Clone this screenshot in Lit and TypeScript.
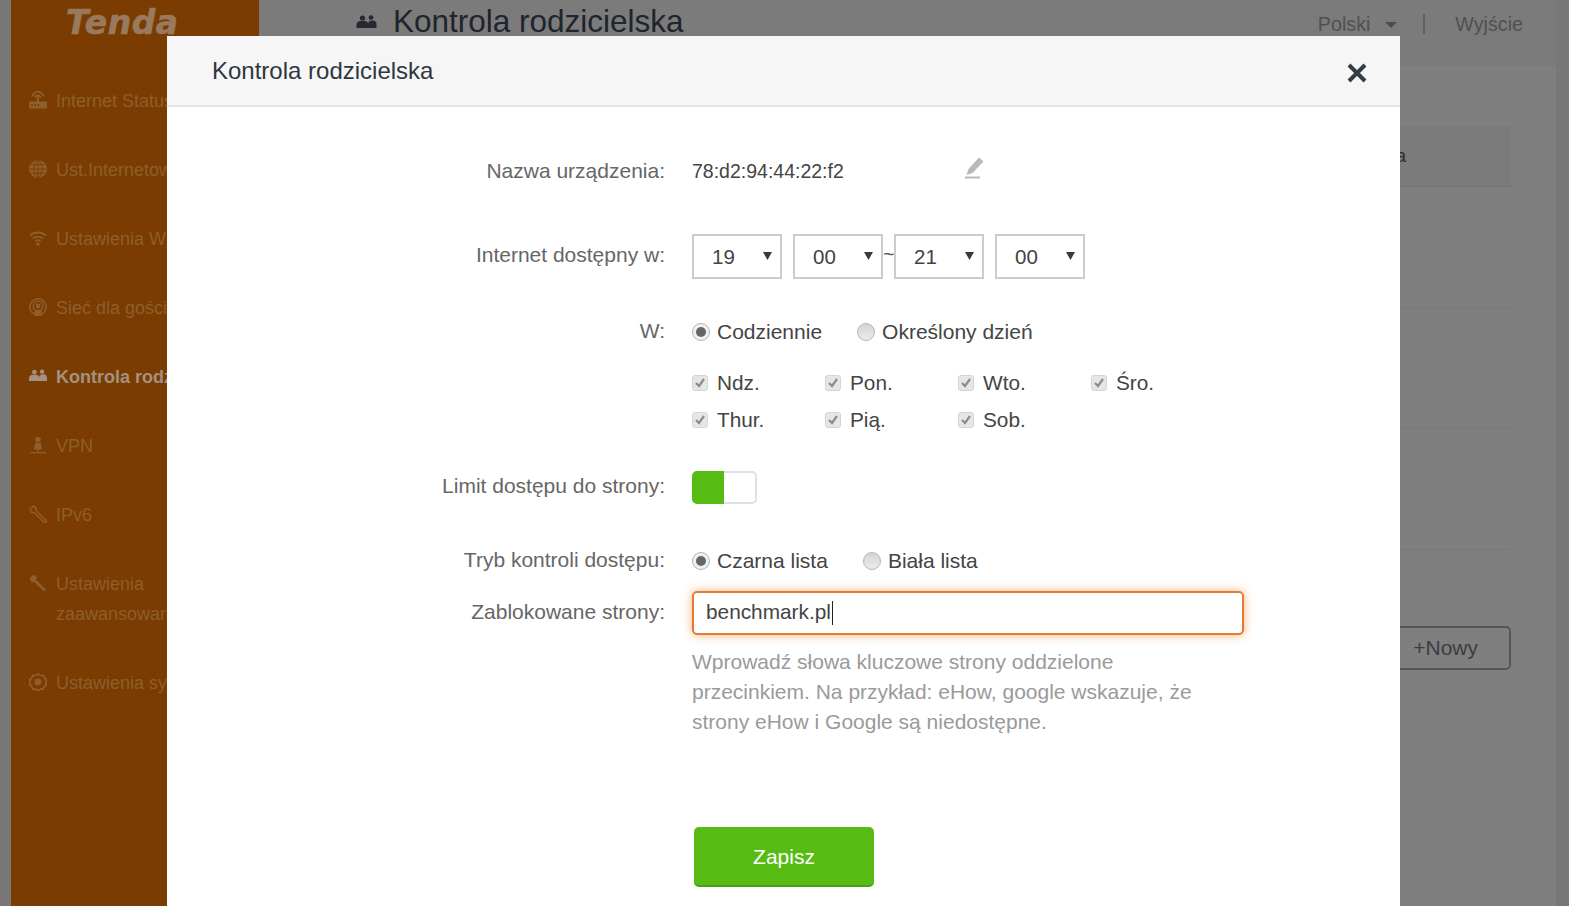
import {LitElement, css, html, svg} from "lit";
import {customElement} from "lit/decorators.js";

const peopleIcon = svg`<circle cx="6" cy="4" r="2.6"/><circle cx="14.5" cy="3.6" r="2.4"/><path d="M0 14v-3.5c0-2 2-3.6 4-3.6h4c2 0 3.2 1.2 3.6 2.6.4-1.8 1.7-3 3.4-3h1.5c2 0 3.5 1.5 3.5 3.5V14z"/>`;

const navItems = [
    {label: "Internet Status", icon: svg`<path d="M9 0C5.500 0 3 2.500 2.500 5.500h1.800C4.800 3.400 6.600 1.800 9 1.800s4.200 1.600 4.700 3.700h1.800C15 2.500 12.500 0 9 0zM9 3.500c-1.800 0-3.200 1.200-3.500 3h7c-.3-1.800-1.700-3-3.500-3zM8 7h2v3.500h7.500a.5.5 0 0 1 .5.500v6a.5.5 0 0 1-.5.500H.5A.5.500 0 0 1 0 17v-6a.5.500 0 0 1 .5-.500H8z"/><g fill="#7a3c00"><circle cx="3" cy="14" r="1"/><circle cx="6" cy="14" r="1"/><circle cx="9" cy="14" r="1"/></g>`},
    {label: "Ust.Internetowe", icon: svg`<circle cx="9" cy="9" r="9"/><g fill="none" stroke="#7a3c00" stroke-width=".9"><ellipse cx="9" cy="9" rx="4" ry="8.500"/><path d="M9 .5v17M.5 9h17M2 4.800h14M2 13.200h14"/></g>`},
    {label: "Ustawienia WiFi", icon: svg`<g fill="none" stroke="currentColor" stroke-width="1.800"><path d="M1 6.500c4.500-4 11.500-4 16 0"/><path d="M3.800 9.500c3-2.500 7.400-2.500 10.400 0"/><path d="M6.500 12.300c1.500-1.200 3.500-1.200 5 0"/></g><circle cx="9" cy="15.300" r="1.700"/>`},
    {label: "Sieć dla gości", icon: svg`<g fill="none" stroke="currentColor" stroke-width="1.600"><circle cx="9" cy="9" r="8.200"/><circle cx="9" cy="8" r="4.800"/></g><circle cx="9" cy="8" r="2.400"/><path d="M5.500 18.500v-5c0-1 1.200-1.700 3.500-1.700s3.500.7 3.500 1.700v5z"/>`},
    {label: "Kontrola rodzicielska", active: true, icon: svg`<g transform="translate(0 1.500) scale(.9)">${peopleIcon}</g>`},
    {label: "VPN", icon: svg`<circle cx="9" cy="3.500" r="2.800"/><path d="M6 7h6l1 6.500H5zM8.300 13.500h1.400V16H8.300zM1 16h16v1.300H1z"/>`},
    {label: "IPv6", icon: svg`<path fill="none" stroke="currentColor" stroke-width="1.500" d="M1 4.500L4.500 1 7 2.500v3l10 10c.8 1-.7 2.700-1.800 1.800L5 7.500H2.500z"/>`},
    {label: "Ustawienia zaawansowane", icon: svg`<path d="M.5 4.500L4.500.5l4 3L6.500 5.500 17 15.500 15 17.500 4.500 7.500 2.800 9z"/>`},
    {label: "Ustawienia systemu", icon: svg`<path fill="none" stroke="currentColor" stroke-width="1.700" d="M9 1l2.500 1.500 2.800-.2 1 2.600 2 1.900L16.800 9l.5 2.700-2 1.900-1 2.600-2.800-.2L9 17.500 6.500 16l-2.800.2-1-2.600-2-1.900L1.200 9 .7 6.800l2-1.900 1-2.600 2.800.2z"/><circle cx="9" cy="9" r="3.400"/>`},
];

const days = ["Ndz.", "Pon.", "Wto.", "Śro.", "Thur.", "Pią.", "Sob."];

@customElement("app-root")
export class AppRoot extends LitElement {

    static styles = css`
        :host {
            display: block;
            position: relative;
            height: 100vh;
            overflow: hidden;
            font-family: "Liberation Sans", Arial, sans-serif;
            color: #444;
        }

        /* page behind the dialog, colours already dimmed */
        .page {
            display: flex;
            height: 100%;
            padding: 0 13px 0 11px;
            box-sizing: border-box;
            background: #787878;
        }
        .sidebar {
            width: 248px;
            flex: none;
            background: #7a3c00;
            color: #8f5e2c;
            font-size: 18px;
        }
        .logo {
            height: 45px;
            padding: 3px 0 0 55px;
            box-sizing: border-box;
            font: italic 700 33px/40px "DejaVu Sans", sans-serif;
            letter-spacing: .5px;
            -webkit-text-stroke: .6px #9a7a5f;
            color: #9a7a5f;
        }
        .nav {
            display: flex;
            flex-direction: column;
            margin-top: 41px;
        }
        .nav-item {
            display: flex;
            gap: 9px;
            padding-left: 18px;
            min-height: 69px;
            line-height: 30px;
            white-space: nowrap;
        }
        .nav-item.two-lines { min-height: 99px; }
        .nav-item.active { color: #a59080; font-weight: 700; }
        .nav-item svg {
            width: 18px;
            height: 18px;
            margin-top: 5px;
            fill: currentColor;
            flex: none;
        }
        .nav-item .text { width: 120px; white-space: normal; word-break: keep-all; }

        .main { flex: 1; min-width: 0; background: #7f7f7f; }
        .topbar {
            display: flex;
            height: 66px;
            padding: 0 33px 0 97px;
            background: #7b7b7b;
        }
        .topbar svg { width: 22px; height: 14px; margin: 14px 15px 0 0; fill: #262a30; }
        .topbar h1 {
            flex: 1;
            margin: 0;
            font-size: 31.500px;
            font-weight: 400;
            line-height: 42px;
            color: #20242c;
        }
        .topbar-right {
            display: flex;
            align-items: center;
            height: 48px;
            font-size: 19.700px;
            color: #505050;
        }
        .caret {
            width: 0;
            height: 0;
            margin: 2px 26px 0 15px;
            border: 6px solid transparent;
            border-top: 6px solid #4c4c4c;
            border-bottom: 0;
        }
        .sep { width: 2px; height: 20px; margin-right: 30px; background: #55606a; }
        .panel { padding: 60px 45px 0 0; }
        .table-head {
            display: flex;
            justify-content: flex-end;
            height: 60px;
            padding-right: 105px;
            line-height: 60px;
            font-size: 18px;
            color: #2c2c2c;
            background: #7b7b7b;
            border-bottom: 1px solid #727272;
        }
        .table-row { height: 120px; border-bottom: 1px solid #787878; }
        .new-row { display: flex; justify-content: flex-end; margin-top: 76px; }
        .new-btn {
            display: flex;
            align-items: center;
            justify-content: flex-end;
            width: 200px;
            height: 44px;
            padding-right: 31px;
            box-sizing: border-box;
            border: 2px solid #555;
            border-radius: 5px;
            font-size: 21px;
            color: #3a3d42;
        }

        /* dialog */
        .modal {
            position: absolute;
            left: 167px;
            top: 36px;
            width: 1233px;
            bottom: 0;
            background: #fff;
        }
        .modal-head {
            display: flex;
            align-items: center;
            justify-content: space-between;
            height: 69px;
            padding: 0 33px 0 45px;
            background: #f6f6f6;
            border-bottom: 2px solid #e6e6e6;
        }
        .modal-head h2 {
            margin: 0;
            font-size: 24px;
            font-weight: 400;
            color: #2f3640;
        }
        .close { width: 20px; height: 20px; margin-top: 5px; stroke: #343c44; stroke-width: 4; }

        .form { padding-top: 42px; font-size: 21px; }
        .row {
            display: grid;
            grid-template-columns: 498px 1fr;
            column-gap: 27px;
            align-items: center;
        }
        .label { padding-bottom: 3px; text-align: right; color: #666; }
        .device { height: 44px; color: #444; }
        .device .label { padding-bottom: 0; }
        .device .value { display: flex; align-items: center; width: 292px; justify-content: space-between; font-size: 19.500px; }
        .pencil { width: 20px; height: 22px; margin-top: -6px; }
        .time { height: 45px; margin-top: 41px; }
        .selects { display: flex; }
        .select {
            display: flex;
            align-items: center;
            justify-content: space-between;
            width: 90px;
            height: 45px;
            padding: 0 8px 0 18px;
            box-sizing: border-box;
            border: 2px solid #ccc;
            font-size: 20.500px;
            color: #444;
        }
        .select svg { width: 9px; height: 9px; margin-top: -2px; fill: #3a3a3a; }
        .select + .select { margin-left: 11px; }
        .tilde { width: 11px; line-height: 40px; height: 45px; font-size: 20px; color: #555; }
        .tilde + .select { margin-left: 0; }

        .choices { height: 30px; margin-top: 38px; }
        .choice-list { display: flex; }
        .radio {
            display: flex;
            align-items: center;
            gap: 7px;
            color: #444;
        }
        .radio + .radio { margin-left: 35px; }
        .radio i {
            display: flex;
            align-items: center;
            justify-content: center;
            width: 18px;
            height: 18px;
            box-sizing: border-box;
            border: 1px solid #b5b5b5;
            border-radius: 50%;
            background: linear-gradient(#d4d4d4, #ececec);
        }
        .radio.on i { background: #f1f1f1; }
        .radio.on i::after {
            content: "";
            width: 10px;
            height: 10px;
            border-radius: 50%;
            background: #666;
        }
        .days {
            display: grid;
            grid-template-columns: repeat(4, 133px);
            grid-auto-rows: 37px;
            margin-top: 17px;
            align-items: center;
            font-size: 20.800px;
        }
        .day { display: flex; align-items: center; gap: 9px; color: #444; }
        .day i {
            display: flex;
            width: 16px;
            height: 16px;
            box-sizing: border-box;
            border: 1px solid #d4d4d4;
            border-radius: 3px;
            background: #e6e6e6;
        }
        .day svg { width: 14px; height: 14px; fill: none; stroke: #8c8c8c; stroke-width: 2.200; }
        .limit { height: 33px; margin-top: 33px; }
        .toggle { display: flex; width: 65px; height: 33px; }
        .toggle-on { width: 32px; background: #56bc14; border-radius: 5px 0 0 5px; }
        .toggle-off {
            flex: 1;
            box-sizing: border-box;
            border: 2px solid #dde0e4;
            border-left: 0;
            border-radius: 0 5px 5px 0;
            background: #fff;
        }
        .mode { height: 30px; margin-top: 42px; }
        .site { height: 44px; margin-top: 15px; }
        .input {
            display: flex;
            align-items: center;
            width: 552px;
            height: 44px;
            padding: 0 0 2px 12px;
            box-sizing: border-box;
            border: 2px solid #de7c3a;
            border-radius: 5px;
            box-shadow: 0 0 10px rgba(245, 140, 50, .7);
            font-size: 20.800px;
            color: #444;
        }
        .cursor { width: 1px; height: 24px; margin: 2px 0 0 1px; background: #222; }
        .hint {
            width: 520px;
            margin-top: 12px;
            line-height: 30px;
            color: #9a9a9a;
        }
        .actions { display: flex; margin-top: 90px; padding-left: 527px; }
        .save {
            width: 180px;
            height: 60px;
            padding: 2px 0 0;
            box-sizing: border-box;
            border: 0;
            border-bottom: 2px solid #4a9e12;
            border-radius: 5px;
            background: #56bc14;
            color: #fff;
            font: 400 21px "Liberation Sans", Arial, sans-serif;
        }
    `;

    private renderRadio(label: string, on: boolean) {
        return html`<label class="radio ${on ? "on" : ""}"><i></i>${label}</label>`;
    }

    private renderSelect(value: string) {
        return html`
            <div class="select">
                ${value}
                <svg viewBox="0 0 10 10"><path d="M0 1h10L5 10z"/></svg>
            </div>
        `;
    }

    protected render() {
        return html`
            <div class="page">
                <aside class="sidebar">
                    <div class="logo">Tenda</div>
                    <nav class="nav">
                        ${navItems.map(item => html`
                            <div class="nav-item ${item.active ? "active" : ""} ${item.label === "Ustawienia zaawansowane" ? "two-lines" : ""}">
                                <svg viewBox="0 0 18 18">${item.icon}</svg>
                                <span class="${item.label === "Ustawienia zaawansowane" ? "text" : ""}">${item.label}</span>
                            </div>
                        `)}
                    </nav>
                </aside>
                <main class="main">
                    <header class="topbar">
                        <svg viewBox="0 0 21 14">${peopleIcon}</svg>
                        <h1>Kontrola rodzicielska</h1>
                        <div class="topbar-right">
                            Polski<span class="caret"></span><span class="sep"></span>Wyjście
                        </div>
                    </header>
                    <section class="panel">
                        <div class="table-head">Akcja</div>
                        <div class="table-row"></div>
                        <div class="table-row"></div>
                        <div class="table-row"></div>
                        <div class="new-row"><div class="new-btn">+Nowy</div></div>
                    </section>
                </main>
            </div>

            <div class="modal">
                <div class="modal-head">
                    <h2>Kontrola rodzicielska</h2>
                    <svg class="close" viewBox="0 0 20 20"><path d="M2 2l16 16M18 2L2 18"/></svg>
                </div>
                <div class="form">
                    <div class="row device">
                        <div class="label">Nazwa urządzenia:</div>
                        <div class="value">
                            <span>78:d2:94:44:22:f2</span>
                            <svg class="pencil" viewBox="0 0 20 22">
                                <path d="M15 .5l4.500 4L8.500 16 2.500 18l2-6z" fill="#b9b9b9"/>
                                <path d="M1 20.500h15" stroke="#b9b9b9" stroke-width="2"/>
                            </svg>
                        </div>
                    </div>
                    <div class="row time">
                        <div class="label">Internet dostępny w:</div>
                        <div class="selects">
                            ${this.renderSelect("19")}
                            ${this.renderSelect("00")}
                            <span class="tilde">~</span>
                            ${this.renderSelect("21")}
                            ${this.renderSelect("00")}
                        </div>
                    </div>
                    <div class="row choices">
                        <div class="label">W:</div>
                        <div class="choice-list">
                            ${this.renderRadio("Codziennie", true)}
                            ${this.renderRadio("Określony dzień", false)}
                        </div>
                    </div>
                    <div class="row">
                        <div></div>
                        <div class="days">
                            ${days.map(day => html`
                                <div class="day">
                                    <i><svg viewBox="0 0 14 14"><path d="M3 7l3 3 5-7"/></svg></i>${day}
                                </div>
                            `)}
                        </div>
                    </div>
                    <div class="row limit">
                        <div class="label">Limit dostępu do strony:</div>
                        <div class="toggle"><span class="toggle-on"></span><span class="toggle-off"></span></div>
                    </div>
                    <div class="row mode">
                        <div class="label">Tryb kontroli dostępu:</div>
                        <div class="choice-list">
                            ${this.renderRadio("Czarna lista", true)}
                            ${this.renderRadio("Biała lista", false)}
                        </div>
                    </div>
                    <div class="row site">
                        <div class="label">Zablokowane strony:</div>
                        <div class="input">benchmark.pl<span class="cursor"></span></div>
                    </div>
                    <div class="row">
                        <div></div>
                        <div class="hint">Wprowadź słowa kluczowe strony oddzielone przecinkiem. Na przykład: eHow, google wskazuje, że strony eHow i Google są niedostępne.</div>
                    </div>
                    <div class="actions"><button class="save">Zapisz</button></div>
                </div>
            </div>
        `;
    }
}
